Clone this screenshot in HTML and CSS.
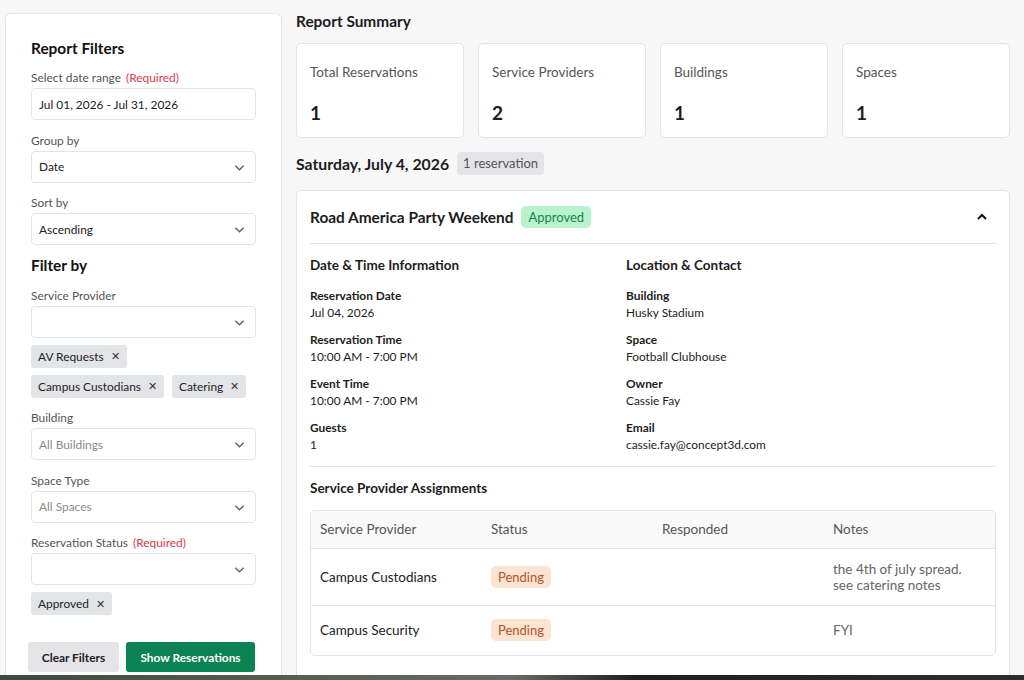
FILE: index.html
```html
<html>

<head>
    <meta http-equiv="Content-Type" content="text/html; charset=utf-8">
    <title>Reservation Report</title>

    <link rel="stylesheet" href="styles.css">
</head>

<body>
    <div class="app">
        <!-- left filter panel -->
        <div class="sidebar">
            <h2 class="side-title">Report Filters</h2>

            <div class="field first">
                <label>Select date range <span class="req">(Required)</span></label>
                <div class="control">Jul 01, 2026 - Jul 31, 2026</div>
            </div>

            <div class="field">
                <label>Group by</label>
                <div class="control select">Date
                    <svg class="chev" viewBox="0 0 12 8"><path d="M1.5 1.5 6 6l4.5-4.5" /></svg>
                </div>
            </div>

            <div class="field">
                <label>Sort by</label>
                <div class="control select">Ascending
                    <svg class="chev" viewBox="0 0 12 8"><path d="M1.5 1.5 6 6l4.5-4.5" /></svg>
                </div>
            </div>

            <h2 class="side-title filter-by">Filter by</h2>

            <div class="field">
                <label>Service Provider</label>
                <div class="control select">
                    <svg class="chev" viewBox="0 0 12 8"><path d="M1.5 1.5 6 6l4.5-4.5" /></svg>
                </div>
                <div class="chips">
                    <span class="chip">AV Requests <span class="x">&#x2715;</span></span>
                    <span class="chip">Campus Custodians <span class="x">&#x2715;</span></span>
                    <span class="chip">Catering <span class="x">&#x2715;</span></span>
                </div>
            </div>

            <div class="field">
                <label>Building</label>
                <div class="control select placeholder">All Buildings
                    <svg class="chev" viewBox="0 0 12 8"><path d="M1.5 1.5 6 6l4.5-4.5" /></svg>
                </div>
            </div>

            <div class="field">
                <label>Space Type</label>
                <div class="control select placeholder">All Spaces
                    <svg class="chev" viewBox="0 0 12 8"><path d="M1.5 1.5 6 6l4.5-4.5" /></svg>
                </div>
            </div>

            <div class="field">
                <label>Reservation Status <span class="req">(Required)</span></label>
                <div class="control select">
                    <svg class="chev" viewBox="0 0 12 8"><path d="M1.5 1.5 6 6l4.5-4.5" /></svg>
                </div>
                <div class="chips">
                    <span class="chip">Approved <span class="x">&#x2715;</span></span>
                </div>
            </div>

            <div class="actions">
                <button class="btn btn-clear">Clear Filters</button>
                <button class="btn btn-show">Show Reservations</button>
            </div>
        </div>

        <!-- report -->
        <div class="report">
            <h2 class="summary-title">Report Summary</h2>
            <div class="stats">
                <div class="stat"><div class="stat-label">Total Reservations</div><div class="stat-num">1</div></div>
                <div class="stat"><div class="stat-label">Service Providers</div><div class="stat-num">2</div></div>
                <div class="stat"><div class="stat-label">Buildings</div><div class="stat-num">1</div></div>
                <div class="stat"><div class="stat-label">Spaces</div><div class="stat-num">1</div></div>
            </div>

            <div class="day-head">
                <h3>Saturday, July 4, 2026</h3>
                <span class="count">1 reservation</span>
            </div>

            <div class="event">
                <div class="event-head">
                    <h3>Road America Party Weekend</h3>
                    <span class="badge approved">Approved</span>
                    <svg class="chev-up" viewBox="0 0 12 8"><path d="M2 6 6 2l4 4" /></svg>
                </div>

                <div class="info">
                    <div class="info-col">
                        <h4>Date &amp; Time Information</h4>
                        <div class="item"><div class="k">Reservation Date</div><div class="v">Jul 04, 2026</div></div>
                        <div class="item"><div class="k">Reservation Time</div><div class="v">10:00 AM - 7:00 PM</div></div>
                        <div class="item"><div class="k">Event Time</div><div class="v">10:00 AM - 7:00 PM</div></div>
                        <div class="item"><div class="k">Guests</div><div class="v">1</div></div>
                    </div>
                    <div class="info-col">
                        <h4>Location &amp; Contact</h4>
                        <div class="item"><div class="k">Building</div><div class="v">Husky Stadium</div></div>
                        <div class="item"><div class="k">Space</div><div class="v">Football Clubhouse</div></div>
                        <div class="item"><div class="k">Owner</div><div class="v">Cassie Fay</div></div>
                        <div class="item"><div class="k">Email</div><div class="v">cassie.fay@concept3d.com</div></div>
                    </div>
                </div>

                <div class="assign">
                    <h4>Service Provider Assignments</h4>
                    <div class="table-wrap">
                        <table>
                            <thead>
                                <tr><th>Service Provider</th><th>Status</th><th>Responded</th><th>Notes</th></tr>
                            </thead>
                            <tbody>
                                <tr class="tall">
                                    <td>Campus Custodians</td>
                                    <td><span class="badge pending">Pending</span></td>
                                    <td></td>
                                    <td class="note">the 4th of july spread.<br>see catering notes</td>
                                </tr>
                                <tr>
                                    <td>Campus Security</td>
                                    <td><span class="badge pending">Pending</span></td>
                                    <td></td>
                                    <td class="note">FYI</td>
                                </tr>
                            </tbody>
                        </table>
                    </div>
                </div>
            </div>
        </div>
    </div>
    <div class="photo-strip"></div>
</body>

</html>
```

FILE: styles.css
```css
body {
    margin: 0;
    font-family: "Lato", "Liberation Sans", sans-serif;
    color: #1c1c1c;
    background: #2f3430;
}

.app {
    display: flex;
    height: 675px;
    overflow: hidden;
    background: #f7f7f8;
}

/* ---------- filter panel ---------- */

.sidebar {
    width: 225px;
    margin: 13px 0 0 5px;
    padding: 0 25px;
    background: #fff;
    border: 1px solid #e3e4e8;
    border-bottom: none;
    border-radius: 6px 6px 0 0;
    flex-shrink: 0;
}

.side-title {
    font-size: 15.4px;
    font-weight: 700;
    line-height: 20px;
    margin: 24px 0 0;
    color: #111;
}

.filter-by {
    margin-top: 10px;
}

.field {
    margin-top: 12.5px;
}

.field.first {
    margin-top: 12px;
}

.field label {
    display: block;
    font-size: 11.9px;
    line-height: 15px;
    color: #555;
    margin-bottom: 3px;
}

.req {
    color: #e0394a;
    margin-left: 2px;
}

.control {
    position: relative;
    height: 32px;
    box-sizing: border-box;
    border: 1px solid #e1e3e7;
    border-radius: 4px;
    padding: 0 7px;
    display: flex;
    align-items: center;
    font-size: 11.9px;
    color: #222;
}

.control.placeholder {
    color: #8a8a8a;
}

.chev {
    position: absolute;
    right: 10px;
    top: 12px;
    width: 11px;
    height: 8px;
    fill: none;
    stroke: #666;
    stroke-width: 1.6;
}

.chips {
    display: flex;
    flex-wrap: wrap;
    gap: 7px 8px;
    margin-top: 7px;
}

.chip {
    height: 23px;
    display: inline-flex;
    align-items: center;
    padding: 0 7px;
    background: #e2e4e8;
    border-radius: 3px;
    font-size: 11.9px;
    color: #222;
}

.chip .x {
    margin-left: 7px;
    font-size: 11px;
    color: #333;
}

.actions {
    display: flex;
    gap: 7px;
    margin: 27px 0 0 -3px;
}

.btn {
    height: 30px;
    border: none;
    border-radius: 3px;
    font-family: inherit;
    font-size: 11.9px;
    font-weight: 700;
    padding: 0;
    cursor: pointer;
}

.btn-clear {
    width: 91px;
    background: #e4e4e6;
    color: #222;
}

.btn-show {
    width: 129px;
    background: #0b8253;
    color: #fff;
}

/* ---------- report ---------- */

.report {
    width: 714px;
    margin-left: 14px;
    flex-shrink: 0;
}

.summary-title {
    font-size: 15.4px;
    font-weight: 700;
    line-height: 20px;
    margin: 11px 0 0;
}

.stats {
    display: grid;
    grid-template-columns: repeat(4, 1fr);
    gap: 14px;
    margin-top: 12px;
}

.stat {
    height: 95px;
    box-sizing: border-box;
    background: #fff;
    border: 1px solid #e1e3e7;
    border-radius: 5px;
    padding: 19px 13px 0;
}

.stat-label {
    font-size: 13.5px;
    line-height: 18px;
    color: #555;
}

.stat-num {
    font-size: 19px;
    font-weight: 700;
    line-height: 24px;
    margin-top: 20px;
}

.day-head {
    display: flex;
    align-items: center;
    gap: 8px;
    margin-top: 14px;
}

.day-head h3 {
    font-size: 15.8px;
    font-weight: 700;
    margin: 0;
}

.count {
    height: 23px;
    line-height: 23px;
    padding: 0 6px;
    background: #e4e4e6;
    border-radius: 4px;
    font-size: 13px;
    color: #555;
}

.event {
    margin-top: 15px;
    background: #fff;
    border: 1px solid #e1e3e7;
    border-radius: 5px;
    padding: 0 13px;
    height: 600px;
}

.event-head {
    display: flex;
    align-items: center;
    gap: 8px;
    height: 52px;
    border-bottom: 1px solid #e1e3e7;
}

.event-head h3 {
    font-size: 15.4px;
    font-weight: 700;
    margin: 0;
}

.chev-up {
    margin-left: auto;
    margin-right: 8px;
    width: 12px;
    height: 8px;
    fill: none;
    stroke: #111;
    stroke-width: 2;
}

.badge {
    display: inline-block;
    height: 22px;
    line-height: 22px;
    padding: 0 7px;
    border-radius: 5px;
    font-size: 13px;
}

.approved {
    background: #b9f3cb;
    color: #17864a;
}

.pending {
    background: #fde3d2;
    color: #b4541f;
}

.info {
    display: flex;
    padding: 12px 0 3px;
    border-bottom: 1px solid #e1e3e7;
}

.info-col {
    width: 316px;
}

h4 {
    font-size: 13.5px;
    font-weight: 700;
    line-height: 18px;
    margin: 0 0 13px;
}

.item {
    margin-bottom: 10px;
    font-size: 11.9px;
    line-height: 17px;
}

.item .k {
    font-weight: 700;
}

.assign {
    padding-top: 12px;
}

.table-wrap {
    margin-top: 11px;
    border: 1px solid #e1e3e7;
    border-radius: 5px;
    overflow: hidden;
}

table {
    width: 100%;
    border-collapse: collapse;
    table-layout: fixed;
    font-size: 13.5px;
}

th {
    height: 37px;
    background: #f9f9fa;
    text-align: left;
    font-weight: 400;
    color: #555;
    padding: 0 9px;
    border-bottom: 1px solid #e1e3e7;
}

td {
    height: 50px;
    padding: 0 9px;
    color: #222;
}

tr.tall td {
    height: 57px;
    border-bottom: 1px solid #e1e3e7;
}

td.note {
    color: #666;
    line-height: 16px;
}

.photo-strip {
    height: 5px;
    background: linear-gradient(90deg, #3c4a3e 0%, #56604f 30%, #6a6a66 50%, #1e201f 62%, #2c2f2c 100%);
}
```
